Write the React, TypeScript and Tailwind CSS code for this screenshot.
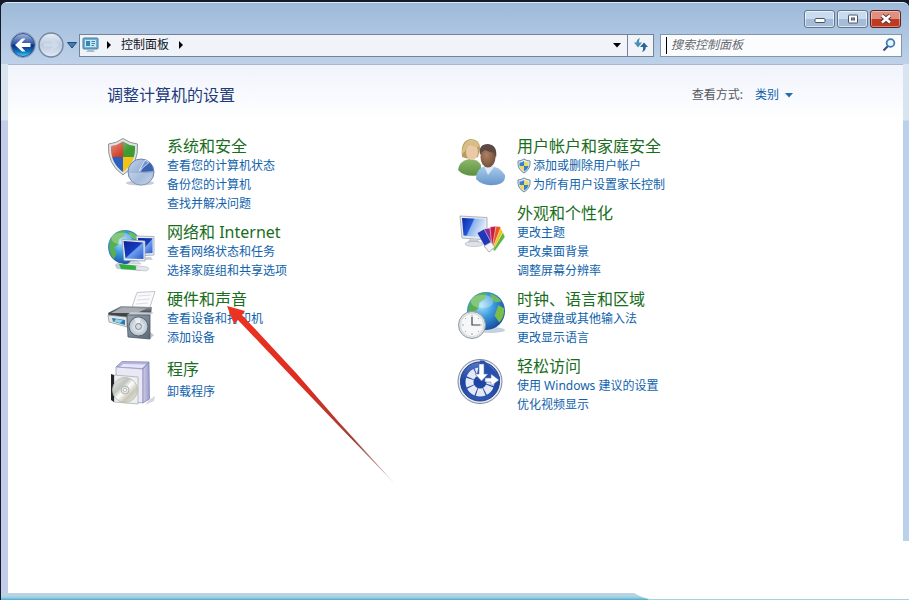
import React from 'react';

type IconProps = { className?: string };

function SecurityIcon({ className }: IconProps) {
  return (
    <svg viewBox="0 0 48 48" className={className} aria-hidden="true">
      <defs>
        <clipPath id="sec-shield">
          <path d="M16 4.500Q22 8.500 28 9Q28.800 26 16 35Q3.200 26 4 9Q10 8.500 16 4.500Z" />
        </clipPath>
        <linearGradient id="sec-shine" x1="0" y1="0" x2="1" y2="1">
          <stop offset="0" stopColor="#fff" stopOpacity="0.6" />
          <stop offset="0.6" stopColor="#fff" stopOpacity="0" />
        </linearGradient>
        <linearGradient id="sec-pie" x1="0" y1="0" x2="1" y2="1">
          <stop offset="0" stopColor="#c6d6ee" />
          <stop offset="0.6" stopColor="#8ba6d0" />
          <stop offset="1" stopColor="#b3c8e4" />
        </linearGradient>
      </defs>
      <ellipse cx="33" cy="46" rx="14" ry="2.500" fill="#c8ccd2" />
      <path d="M16 1.500Q23 6.500 30.500 7Q32 27 16 38Q0 27 1.500 7Q9 6.500 16 1.500Z" fill="#dfe3e4" stroke="#8a9494" />
      <g clipPath="url(#sec-shield)">
        <path d="M0 0H16V20H0Z" fill="#cf3b22" />
        <path d="M16 0H32V20H16Z" fill="#3f9a31" />
        <path d="M0 20H16V40H0Z" fill="#2a5fc0" />
        <path d="M16 20H32V40H16Z" fill="#f2c418" />
        <path d="M0 0H32V20Q14 14 0 24Z" fill="url(#sec-shine)" />
      </g>
      <circle cx="34" cy="35" r="13" fill="url(#sec-pie)" stroke="#6d87b2" />
      <path d="M34 35L38.500 23.500A12.500 12.500 0 0 1 46.500 34Z" fill="#3e63ac" />
      <path d="M32 34L38 23.300A12 12 0 0 1 42 25.500Z" fill="#6c93d4" stroke="#e6eefa" strokeWidth="0.8" />
      <path d="M22 36H46A12 12 0 0 1 22 36Z" fill="#fff" opacity="0.25" />
    </svg>
  );
}

function Globe({ cx, cy, r, id }: { cx: number; cy: number; r: number; id: string }) {
  return (
    <g transform={`translate(${cx} ${cy}) scale(${r / 20})`}>
      <defs>
        <radialGradient id={id} cx="0.38" cy="0.35" r="0.7">
          <stop offset="0" stopColor="#a8e4f8" />
          <stop offset="0.45" stopColor="#3c9be0" />
          <stop offset="1" stopColor="#164a9c" />
        </radialGradient>
      </defs>
      <circle r="20" fill={`url(#${id})`} />
      <path d="M-16-11Q-10-20 1-19L-1-13L-7-9L-8-3L-13 1L-10 8L-13 14Q-22 4-16-11Z" fill="#58b04c" />
      <path d="M4-18Q12-17 16-10L10-9L6-13Z" fill="#6cbd58" />
      <path d="M13-6L19-3Q20 6 14 12L9 5Z" fill="#79bd4a" />
      <ellipse cx="-4" cy="-10" rx="12" ry="7" fill="#fff" opacity="0.28" />
    </g>
  );
}

function NetworkIcon({ className }: IconProps) {
  return (
    <svg viewBox="0 0 48 48" className={className} aria-hidden="true">
      <defs>
        <linearGradient id="net-screen" x1="0" y1="0" x2="1" y2="1">
          <stop offset="0" stopColor="#0b2494" />
          <stop offset="0.5" stopColor="#143cbe" />
          <stop offset="0.55" stopColor="#6da0ee" />
          <stop offset="1" stopColor="#2a58d0" />
        </linearGradient>
      </defs>
      <Globe cx={18} cy={24} r={17} id="net-globe" />
      <path d="M29 13L47 13.500V32L31 33Z" fill="#e7eaf2" stroke="#9da5b6" strokeWidth="0.8" />
      <path d="M31 15L45.500 15.300V30L32 31Z" fill="url(#net-screen)" />
      <path d="M33 34H44L46 37H34Z" fill="#cbd0da" />
      <path d="M15 16.500L38 18V38L17 37.500Z" fill="#eef1f7" stroke="#98a1b3" strokeWidth="0.8" />
      <path d="M16.500 18L36.500 19.500V36L18.500 35.500Z" fill="url(#net-screen)" />
      <path d="M24 38L31 38.500L34 41H21Z" fill="#d8dce5" stroke="#a9b0bf" strokeWidth="0.5" />
      <path d="M8 43Q8 40 12 40L34 44.500V48L10 46Z" fill="#c4cbd2" />
      <path d="M12 41L29 42.500V47L14 46Z" fill="#2fae3f" />
      <path d="M29 42.500L40 44Q44 46 39 48L29 47Z" fill="#e2e6ea" stroke="#a3abb5" strokeWidth="0.5" />
    </svg>
  );
}

function PrinterIcon({ className }: IconProps) {
  return (
    <svg viewBox="0 0 48 48" className={className} aria-hidden="true">
      <defs>
        <linearGradient id="prn-body" x1="0" y1="0" x2="0" y2="1">
          <stop offset="0" stopColor="#9ba2a8" />
          <stop offset="0.5" stopColor="#4b5259" />
          <stop offset="1" stopColor="#2b3036" />
        </linearGradient>
        <linearGradient id="prn-box" x1="0" y1="0" x2="1" y2="1">
          <stop offset="0" stopColor="#9aa6b2" />
          <stop offset="1" stopColor="#5a6774" />
        </linearGradient>
        <radialGradient id="prn-cone">
          <stop offset="0" stopColor="#8f9ca8" />
          <stop offset="0.3" stopColor="#e6ebef" />
          <stop offset="1" stopColor="#b4c0ca" />
        </radialGradient>
      </defs>
      <path d="M25 17L30 2.500L48 1.500L42 20Z" fill="#fafafc" stroke="#b5b8bd" strokeWidth="0.8" />
      <path d="M31 6L44 5M30 10L43 9M29 14L41 13" stroke="#dcdee4" />
      <path d="M1 23L14 16L45 17L44 24L32 28L2 27Z" fill="url(#prn-body)" />
      <path d="M4 23L15 17.500L40 18.500L30 23Z" fill="#a7adb3" />
      <path d="M1 25L20 27V37L2 32Z" fill="#e0e4e7" stroke="#8b9298" strokeWidth="0.7" />
      <path d="M5 28L18 30V35L6 31.500Z" fill="#297cae" />
      <path d="M9 29L16 30.500L13 33L7 31.500Z" fill="#93d5e6" />
      <path d="M20 25L24 22L47 22.500L43 25V49L47 45Z" fill="#c3c9ce" />
      <path d="M20 25L43 25V49L21 47Z" fill="url(#prn-box)" stroke="#4a5763" strokeWidth="0.8" />
      <circle cx="31.500" cy="36.500" r="9.500" fill="url(#prn-cone)" stroke="#566371" />
      <path d="M31.500 36.500L27 28.800A9 9 0 0 1 34 28Z" fill="#fff" opacity="0.6" />
      <circle cx="31.500" cy="36.500" r="3" fill="#d3dae0" stroke="#7b8893" />
    </svg>
  );
}

function ProgramsIcon({ className }: IconProps) {
  return (
    <svg viewBox="0 0 48 48" className={className} aria-hidden="true">
      <defs>
        <linearGradient id="prg-cd" x1="0" y1="0" x2="1" y2="1">
          <stop offset="0" stopColor="#f4f4ee" />
          <stop offset="0.35" stopColor="#bfc3bd" />
          <stop offset="0.5" stopColor="#fdfdfb" />
          <stop offset="0.7" stopColor="#c9c7b6" />
          <stop offset="1" stopColor="#eef0ee" />
        </linearGradient>
        <linearGradient id="prg-side" x1="0" y1="0" x2="1" y2="0">
          <stop offset="0" stopColor="#cdcdea" />
          <stop offset="1" stopColor="#9a9ac8" />
        </linearGradient>
      </defs>
      <path d="M42 43L48 39L47 44L38 48Z" fill="#d6d6dc" />
      <path d="M9 10L15 4.500L42 5L36 12Z" fill="#b6b4e0" stroke="#7f7eae" strokeWidth="0.7" />
      <path d="M16 7L39 7.500L35 11L13 10Z" fill="#e6e4fa" />
      <path d="M9 10L36 12V46L9 43Z" fill="#e9e9f6" stroke="#9c9cc2" strokeWidth="0.8" />
      <path d="M36 12L42 5L42.500 42L36 46Z" fill="url(#prg-side)" stroke="#7f7eae" strokeWidth="0.7" />
      <path d="M7 18L31 20V47L7 45Z" fill="#eef0ee" stroke="#a9aeb0" strokeWidth="0.8" />
      <path d="M4 17L7 18V45L4 43Z" fill="#22262a" />
      <circle cx="18" cy="33" r="12.500" fill="url(#prg-cd)" stroke="#b4b9b5" strokeWidth="0.8" />
      <circle cx="18" cy="33" r="4" fill="#e2e5e3" stroke="#a6aca8" strokeWidth="0.8" />
      <circle cx="18" cy="33" r="1.600" fill="#fff" stroke="#9aa09c" strokeWidth="0.6" />
    </svg>
  );
}

function UsersIcon({ className }: IconProps) {
  return (
    <svg viewBox="0 0 48 48" className={className} aria-hidden="true">
      <defs>
        <linearGradient id="usr-green" x1="0" y1="0" x2="0" y2="1">
          <stop offset="0" stopColor="#8fb86a" />
          <stop offset="1" stopColor="#5a8f40" />
        </linearGradient>
        <linearGradient id="usr-blue" x1="0" y1="0" x2="0" y2="1">
          <stop offset="0" stopColor="#a9cdf0" />
          <stop offset="1" stopColor="#6795c9" />
        </linearGradient>
        <radialGradient id="usr-skin" cx="0.4" cy="0.4" r="0.7">
          <stop offset="0" stopColor="#b08060" />
          <stop offset="1" stopColor="#6b4a38" />
        </radialGradient>
      </defs>
      <path d="M5 20Q3 3 14 2Q23 2 23 12L21 20Q13 23 5 20Z" fill="#b89c60" />
      <path d="M1 33Q2 24 12 22Q21 22 24 28V38Q8 41 1 33Z" fill="url(#usr-green)" />
      <ellipse cx="15" cy="15" rx="6" ry="8" fill="#ecc9a6" />
      <path d="M5 13Q8 2 15 2.500Q22 3 22 10Q15 10 12 7Q10 13 5 17Z" fill="#d6bf86" />
      <path d="M19 42Q19 31 29 29Q42 28 48 38Q49 47 37 48Q25 49 19 42Z" fill="url(#usr-blue)" />
      <path d="M27 29L31 38L38 29Z" fill="#dfeaf6" />
      <ellipse cx="31" cy="20" rx="7.500" ry="10.500" fill="url(#usr-skin)" />
      <path d="M23 18Q21 7 31 7Q41 8 39 21L37 16Q32 15 28 13Q25 14 23 18Z" fill="#5c4a42" />
    </svg>
  );
}

function AppearanceIcon({ className }: IconProps) {
  return (
    <svg viewBox="0 0 48 48" className={className} aria-hidden="true">
      <defs>
        <linearGradient id="app-screen" x1="0" y1="0" x2="1" y2="0.4">
          <stop offset="0" stopColor="#0d26a6" />
          <stop offset="0.45" stopColor="#2458d8" />
          <stop offset="0.5" stopColor="#8ab2ee" />
          <stop offset="1" stopColor="#dfeaf8" />
        </linearGradient>
      </defs>
      <path d="M3 12L30 13.500V36L5 34Z" fill="#e8ebf1" stroke="#9aa2b0" strokeWidth="0.8" />
      <path d="M5 14L28 15V34L6.500 31.500Z" fill="url(#app-screen)" />
      <path d="M13 35L21 36L24 40L9 40Z" fill="#c6cad2" />
      <ellipse cx="17" cy="40" rx="9" ry="2.500" fill="#dfe2e8" stroke="#a9afba" strokeWidth="0.6" />
      <g stroke="#fff" strokeWidth="0.5">
        <path d="M33 45L46 28L48 33L38 47Z" fill="#5fb63a" />
        <path d="M33 45L43 23L46 28L36 46Z" fill="#f0c21c" />
        <path d="M32 45L39 22L44 23L35 46Z" fill="#e8571d" />
        <path d="M30 45L33 23L39 22L35 45Z" fill="#c81d44" />
        <path d="M28 44L26 25L33 24L35 43Z" fill="#8a2f98" />
        <path d="M28 43L20 29L27 25L35 40Z" fill="#2136b8" />
      </g>
      <path d="M27 42L34 38L38 43L32 48Z" fill="#f3f4f6" stroke="#8b92a0" strokeWidth="0.7" />
    </svg>
  );
}

function ClockRegionIcon({ className }: IconProps) {
  return (
    <svg viewBox="0 0 48 48" className={className} aria-hidden="true">
      <ellipse cx="34" cy="40" rx="14" ry="3" fill="#c5d1dc" />
      <Globe cx={29} cy={21} r={19} id="clk-globe" />
      <circle cx="15" cy="35" r="13.500" fill="#dde2e6" stroke="#929aa1" />
      <circle cx="15" cy="35" r="11.500" fill="#f6f8f8" stroke="#cfd5d9" strokeWidth="0.8" />
      <path d="M15 25V27M15 43V45M5 35H7M23 35H25M8 28L9 29M22 28L21 29M8 42L9 41M22 42L21 41" stroke="#8b949b" strokeWidth="0.8" />
      <path d="M15 27V35H23" stroke="#3b4247" strokeWidth="1.200" fill="none" />
    </svg>
  );
}

function EaseIcon({ className }: IconProps) {
  return (
    <svg viewBox="0 0 48 48" className={className} aria-hidden="true">
      <defs>
        <linearGradient id="ease-bg" x1="0" y1="0" x2="0" y2="1">
          <stop offset="0" stopColor="#5478c6" />
          <stop offset="0.5" stopColor="#1d42a2" />
          <stop offset="1" stopColor="#3059b6" />
        </linearGradient>
      </defs>
      <circle cx="23" cy="24.500" r="22" fill="#e3e7ee" stroke="#7a86a2" />
      <circle cx="23" cy="24.500" r="19.500" fill="url(#ease-bg)" stroke="#233f87" />
      <circle cx="23" cy="25" r="10.500" fill="none" stroke="#e4e9f3" strokeWidth="8" strokeDasharray="7.250 1" strokeDashoffset="-4" />
      <path d="M23 3.500H27L43 20V23L25 25L20 17Z" fill="#284fac" />
      <path d="M22 7H27V17H31L24.500 24L18 17H22Z" fill="#fff" stroke="#5f7bb8" strokeWidth="0.6" />
      <path d="M28 21H34V17L42 23L34 29V25H28Z" fill="#fff" stroke="#5f7bb8" strokeWidth="0.6" />
    </svg>
  );
}

function MiniShield() {
  return (
    <svg viewBox="0 0 14 16" className="h-4 w-[14px] shrink-0" aria-hidden="true">
      <path d="M7 1Q10 3 13 3Q14 11 7 15Q0 11 1 3Q4 3 7 1Z" fill="#e4ecf1" stroke="#6a8ba2" />
      <path d="M7 3V8H2.500L2.500 4.500Q5 4.500 7 3Z" fill="#3a80c9" />
      <path d="M7 3Q9 4.500 11.500 4.500V8H7Z" fill="#ecd968" />
      <path d="M2.500 8H7V13.500Q3 11 2.500 8Z" fill="#ecd968" />
      <path d="M7 8H11.500Q11 11 7 13.500Z" fill="#3a80c9" />
    </svg>
  );
}

function PointerArrow() {
  return (
    <svg viewBox="0 0 168 178" className="pointer-events-none absolute left-[120px] top-4 h-[178px] w-[168px]" aria-hidden="true">
      <defs>
        <linearGradient id="arrow-fade" gradientUnits="userSpaceOnUse" x1="0" y1="0" x2="168" y2="178">
          <stop offset="0" stopColor="#ee3322" />
          <stop offset="0.45" stopColor="#dc2d20" />
          <stop offset="0.75" stopColor="#9c4038" />
          <stop offset="1" stopColor="#cfb5b3" />
        </linearGradient>
      </defs>
      <path d="M0 0L18 5L15 9L70 68L110 114L168 178L108 116L66 72L11 14L7 18Z" fill="url(#arrow-fade)" />
    </svg>
  );
}

interface CategoryProps {
  title: string;
  links: string[];
  Icon: React.ComponentType<IconProps>;
  shield?: boolean;
  roomy?: boolean;
  children?: React.ReactNode;
}

const leftColumn: CategoryProps[] = [
  { title: '系统和安全', links: ['查看您的计算机状态', '备份您的计算机', '查找并解决问题'], Icon: SecurityIcon },
  { title: '网络和 Internet', links: ['查看网络状态和任务', '选择家庭组和共享选项'], Icon: NetworkIcon },
  { title: '硬件和声音', links: ['查看设备和打印机', '添加设备'], Icon: PrinterIcon, children: <PointerArrow /> },
  { title: '程序', links: ['卸载程序'], Icon: ProgramsIcon, roomy: true },
];

const rightColumn: CategoryProps[] = [
  { title: '用户帐户和家庭安全', links: ['添加或删除用户帐户', '为所有用户设置家长控制'], Icon: UsersIcon, shield: true },
  { title: '外观和个性化', links: ['更改主题', '更改桌面背景', '调整屏幕分辨率'], Icon: AppearanceIcon },
  { title: '时钟、语言和区域', links: ['更改键盘或其他输入法', '更改显示语言'], Icon: ClockRegionIcon },
  { title: '轻松访问', links: ['使用 Windows 建议的设置', '优化视频显示'], Icon: EaseIcon },
];

function Category({ title, links, Icon, shield, roomy, children }: CategoryProps) {
  return (
    <section className="relative flex gap-3">
      <Icon className="h-12 w-12 shrink-0 overflow-visible" />
      <div className={roomy ? 'flex flex-col gap-[3px] pt-[3px]' : 'flex flex-col'}>
        <h2 className="text-base leading-[19px] text-[#196e1c]">
          <a href="#" className="hover:underline">{title}</a>
        </h2>
        <ul className="text-xs leading-[19px] text-[#0f62ab]">
          {links.map((link) => (
            <li key={link} className="flex items-center gap-[2px]">
              {shield && <MiniShield />}
              <a href="#" className="hover:underline">{link}</a>
            </li>
          ))}
        </ul>
      </div>
      {children}
    </section>
  );
}

function CaptionButtons() {
  const base = 'flex h-[18px] w-[31px] items-center justify-center rounded-[3px] border border-[#66768e] shadow-[inset_0_0_0_1px_rgba(255,255,255,0.6)]';
  return (
    <div className="flex gap-[2px]">
      <button type="button" aria-label="最小化" className={`${base} bg-linear-to-b from-[#c9dbef] from-50% to-[#a5bcd8] to-50%`}>
        <svg viewBox="0 0 12 12" className="h-3 w-3"><rect x="1" y="5.500" width="10" height="4" rx="1" fill="#fff" stroke="#4a5568" /></svg>
      </button>
      <button type="button" aria-label="最大化" className={`${base} bg-linear-to-b from-[#c9dbef] from-50% to-[#a5bcd8] to-50%`}>
        <svg viewBox="0 0 12 12" className="h-3 w-3">
          <rect x="1.500" y="2" width="9" height="8" rx="0.500" fill="#fff" stroke="#4a5568" />
          <rect x="4.500" y="5" width="3" height="2" fill="#9fb4d0" stroke="#4a5568" />
        </svg>
      </button>
      <button type="button" aria-label="关闭" className="flex h-[18px] w-[31px] items-center justify-center rounded-[3px] border border-[#5c2323] bg-linear-to-b from-[#dd8f80] from-50% to-[#bf3a22] to-50% shadow-[inset_0_0_0_1px_rgba(255,255,255,0.4)]">
        <svg viewBox="0 0 12 12" className="h-3 w-3">
          <path d="M2 2.500L10 9.500M10 2.500L2 9.500" stroke="#5a3238" strokeWidth="4.400" />
          <path d="M2 2.500L10 9.500M10 2.500L2 9.500" stroke="#fff" strokeWidth="2.600" />
        </svg>
      </button>
    </div>
  );
}

function NavButtons() {
  return (
    <div className="flex w-[70px] shrink-0 items-center">
      <button type="button" aria-label="后退" className="h-7 w-7">
        <svg viewBox="0 0 28 28" className="h-7 w-7">
          <defs>
            <linearGradient id="nav-back" x1="0" y1="0" x2="0" y2="1">
              <stop offset="0" stopColor="#a3b7dc" />
              <stop offset="0.45" stopColor="#2e56a4" />
              <stop offset="0.52" stopColor="#08307f" />
              <stop offset="0.8" stopColor="#1476c2" />
              <stop offset="1" stopColor="#4fd4f4" />
            </linearGradient>
          </defs>
          <circle cx="14" cy="14" r="12.500" fill="#d8e2ef" stroke="#8296b5" />
          <circle cx="14" cy="14" r="11.500" fill="url(#nav-back)" stroke="#31538d" />
          <path d="M6 14L13 7.500H16.500L12.500 12H21.500V16H12.500L16.500 20.500H13Z" fill="#fff" />
        </svg>
      </button>
      <button type="button" aria-label="前进" className="h-7 w-7">
        <svg viewBox="0 0 28 28" className="h-7 w-7">
          <defs>
            <linearGradient id="nav-fwd" x1="0" y1="0" x2="0" y2="1">
              <stop offset="0" stopColor="#e8eef6" />
              <stop offset="0.5" stopColor="#bccbde" />
              <stop offset="1" stopColor="#e2eaf4" />
            </linearGradient>
          </defs>
          <circle cx="14" cy="14" r="12" fill="url(#nav-fwd)" stroke="#7587a3" strokeWidth="1.400" />
          <path d="M22 14L15.500 8.500H12.500L16 12.500H7V15.500H16L12.500 19.500H15.500Z" fill="#d0dbe9" />
        </svg>
      </button>
      <button type="button" aria-label="最近的页面" className="flex h-7 w-[14px] items-center justify-center">
        <svg viewBox="0 0 10 8" className="h-2 w-[10px]"><path d="M0.500 1.500H9.500L5 7Z" fill="#3f7eb0" stroke="#1e4a78" /></svg>
      </button>
    </div>
  );
}

function AddressBar() {
  return (
    <div className="flex h-[23px] min-w-0 flex-1 items-stretch border border-[#71839c] bg-[#f0f4f9] text-xs text-[#10151c]">
      <div className="flex flex-1 items-center">
        <svg viewBox="0 0 18 16" className="ml-[2px] h-4 w-[18px]" aria-hidden="true">
          <rect x="1" y="1" width="15" height="11" rx="1" fill="#6fb1d6" stroke="#47799c" />
          <rect x="3" y="3" width="11" height="7" fill="#c8e7f5" />
          <rect x="4" y="4" width="4" height="5" fill="#3485b4" />
          <path d="M9.500 4.500H13M9.500 6.500H13M9.500 8.500H12" stroke="#3f86af" />
          <path d="M6 12.500H11L13 15H4Z" fill="#a9bccb" />
        </svg>
        <svg viewBox="0 0 6 8" className="ml-[6px] h-2 w-[6px]" aria-hidden="true"><path d="M1 0L5 4L1 8Z" fill="#000" /></svg>
        <a href="#" className="ml-[9px]">控制面板</a>
        <svg viewBox="0 0 6 8" className="ml-[9px] h-2 w-[6px]" aria-hidden="true"><path d="M1 0L5 4L1 8Z" fill="#000" /></svg>
      </div>
      <button type="button" aria-label="以前的位置" className="flex w-5 items-center justify-center">
        <svg viewBox="0 0 8 5" className="h-[5px] w-2"><path d="M0 0H8L4 4.500Z" fill="#000" /></svg>
      </button>
      <button type="button" aria-label="刷新" className="flex w-[26px] items-center justify-center border-l border-[#71839c]">
        <svg viewBox="0 0 14 14" className="h-[14px] w-[14px]">
          <path d="M6 0Q2.500 1 2.500 4.500H0L4 9.500L8 4.500H5Q4.800 2 6 0Z" fill="#4790b8" />
          <path d="M8 14Q11.800 13 11.800 9H14L10 4.500L6 9H9Q9.500 12 8 14Z" fill="#2a6394" />
        </svg>
      </button>
    </div>
  );
}

function SearchBox() {
  return (
    <label className="flex h-[23px] w-[242px] shrink-0 items-center border border-[#8296b0] bg-[#fafcfe]">
      <span className="ml-[5px] h-[17px] w-px bg-black" />
      <input
        type="text"
        aria-label="搜索控制面板"
        placeholder="搜索控制面板"
        className="ml-1 min-w-0 flex-1 bg-transparent text-xs italic outline-none placeholder:text-[#66696e] placeholder:opacity-100"
      />
      <svg viewBox="0 0 14 14" className="mr-[5px] h-[14px] w-[14px]" aria-hidden="true">
        <path d="M1.500 12.500L6 8" stroke="#37507f" strokeWidth="2.200" />
        <circle cx="8.500" cy="5" r="3.900" fill="#e8f4fb" stroke="#3a78b0" strokeWidth="1.700" />
      </svg>
    </label>
  );
}

export default function App() {
  return (
    <div
      className="relative flex min-h-screen flex-col border-l border-t-2 border-[#141a2a] bg-[#141a2a]"
      style={{ fontFamily: '"Noto Sans", "Noto Sans CJK SC", sans-serif' }}
    >
      <div className="flex flex-1 flex-col rounded-t-[6px] border-t border-[#dfe9f4] bg-[#b9cde6]">
        {/* Title bar and navigation */}
        <header className="rounded-t-[6px] bg-linear-to-b from-[#9dbad9] to-[#bed1e9]">
          <div className="flex h-[28px] items-start justify-end pr-2 pt-[7px]">
            <CaptionButtons />
          </div>
          <div className="flex h-[33px] items-center gap-[6px] pb-[5px] pl-2 pr-[7px]">
            <div className="flex min-w-0 flex-1 items-center">
              <NavButtons />
              <AddressBar />
            </div>
            <SearchBox />
          </div>
        </header>

        <div className="flex flex-1">
          <div className="w-[7px] shrink-0 bg-linear-to-b from-[#d8e4f0] from-[56px] to-[#c3cce8] to-[57px]" />
          <main className="min-w-0 flex-1 border-t border-[#a9b9cd] bg-white bg-linear-to-b from-[#f1f4fc] to-white to-[58px] pb-8 pl-[99px] pr-24 pt-5">
            <div className="flex items-center justify-between pr-[14px]">
              <h1 className="text-base leading-5 text-[#1e3c7b]">调整计算机的设置</h1>
              <label className="flex items-center text-xs leading-5 text-[#55585e]">
                查看方式:
                <select className="ml-3 w-[26px] appearance-none bg-transparent text-[#0f62ab] outline-none">
                  <option>类别</option>
                </select>
                <svg viewBox="0 0 8 5" className="ml-1 h-[5px] w-2" aria-hidden="true"><path d="M0 0H8L4 4.500Z" fill="#1f6fb0" /></svg>
              </label>
            </div>
            <div className="mt-8 grid grid-cols-2">
              <div className="flex flex-col gap-[10px]">
                {leftColumn.map((item) => <Category key={item.title} {...item} />)}
              </div>
              <div className="flex flex-col gap-[10px]">
                {rightColumn.map((item) => <Category key={item.title} {...item} />)}
              </div>
            </div>
          </main>
          <div className="w-[6px] shrink-0 bg-linear-to-b from-[#d8e4f0] from-[56px] to-[#b9d1ea] to-[57px]" />
        </div>
        <footer className="h-[7px] bg-linear-to-b from-[#bcd2e0] from-30% via-[#9bd5ea] via-60% to-[#58a8c4]" />
      </div>

      {/* Washed-out corner over the window frame */}
      <div className="absolute bottom-[7px] right-0 h-[52px] w-[6px] bg-white" />
      <svg viewBox="0 0 275 7" className="absolute bottom-0 right-0 h-[7px] w-[275px]" aria-hidden="true">
        <path d="M0 0H275V6H18Q10 6 0 0Z" fill="#fff" />
        <path d="M14 6H275V7H14Z" fill="#a5d3dc" />
      </svg>
    </div>
  );
}
